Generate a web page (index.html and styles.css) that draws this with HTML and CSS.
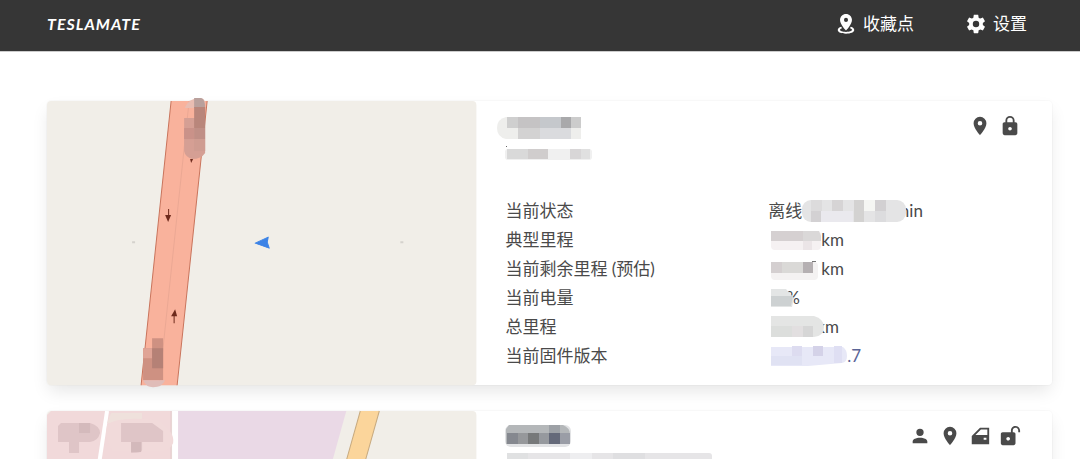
FILE: index.html
```
<!DOCTYPE html>
<html lang="zh-CN">
<head>
    <meta charset="UTF-8">
    <meta name="viewport" content="width=device-width, initial-scale=1.0">
    <title>TeslaMate</title>
    <link rel="stylesheet" href="styles.css">
</head>
<body>

    <nav class="navbar">
        <a href="#" class="brand">TESLAMATE</a>
        <div class="navbar-end">
            <a href="#" class="navbar-item">
                <svg class="icon" viewBox="0 0 24 24"><path d="M12,1C15.600,1 18.500,3.900 18.500,7.500C18.500,12.400 12,19 12,19C12,19 5.500,12.400 5.500,7.500C5.500,3.900 8.400,1 12,1M12,5.300A2.200,2.200 0 0,0 9.800,7.500A2.200,2.200 0 0,0 12,9.700A2.200,2.200 0 0,0 14.200,7.500A2.200,2.200 0 0,0 12,5.300M21,18.500C21,21 17,22.500 12,22.500C7,22.500 3,21 3,18.500C3,17 4.500,15.800 6.700,15L7.800,16.600C6.300,17.100 5.400,17.700 5.400,18.300C5.400,19.600 8.400,20.600 12,20.600C15.600,20.600 18.600,19.600 18.600,18.300C18.600,17.700 17.700,17.100 16.200,16.600L17.300,15C19.500,15.800 21,17 21,18.500Z"/></svg>
                <span>收藏点</span>
            </a>
            <a href="#" class="navbar-item">
                <svg class="icon" viewBox="0 0 24 24"><path d="M12,15.5A3.5,3.5 0 0,1 8.5,12A3.5,3.5 0 0,1 12,8.5A3.5,3.5 0 0,1 15.5,12A3.5,3.5 0 0,1 12,15.5M19.43,12.97C19.47,12.65 19.5,12.33 19.5,12C19.5,11.67 19.47,11.34 19.43,11L21.54,9.37C21.73,9.22 21.78,8.95 21.66,8.73L19.66,5.27C19.54,5.05 19.27,4.96 19.05,5.05L16.56,6.05C16.04,5.66 15.5,5.32 14.87,5.07L14.5,2.42C14.46,2.18 14.25,2 14,2H10C9.75,2 9.54,2.18 9.5,2.42L9.13,5.07C8.5,5.32 7.96,5.66 7.44,6.05L4.95,5.05C4.73,4.96 4.46,5.05 4.34,5.27L2.34,8.73C2.21,8.95 2.27,9.22 2.46,9.37L4.57,11C4.53,11.34 4.5,11.67 4.5,12C4.5,12.33 4.53,12.65 4.57,12.97L2.46,14.63C2.27,14.78 2.21,15.05 2.34,15.27L4.34,18.73C4.46,18.95 4.73,19.03 4.95,18.95L7.44,17.94C7.96,18.34 8.5,18.68 9.13,18.93L9.5,21.58C9.54,21.82 9.75,22 10,22H14C14.25,22 14.46,21.82 14.5,21.58L14.87,18.93C15.5,18.67 16.04,18.34 16.56,17.94L19.05,18.95C19.27,19.03 19.54,18.95 19.66,18.73L21.66,15.27C21.78,15.05 21.73,14.78 21.54,14.63L19.43,12.97Z"/></svg>
                <span>设置</span>
            </a>
        </div>
    </nav>

    <main class="container">
        <article class="car-card">
            <div class="car-map">
                <svg viewBox="0 0 429 284">
                    <rect width="429" height="284" rx="4" fill="#f1eee8"/>
                    <!-- road -->
                    <path d="M124 0H160L130 284H94Z" fill="#f9b29c"/>
                    <path d="M124 0L94 284M160 0L130 284" stroke="#c9745c" fill="none"/>
                    <path d="M142 0L112 284" stroke="#eba894" fill="none"/>
                    <path d="M121.500 108V116" stroke="#6e2a1c"/>
                    <path d="M118 114L121 121L124 114Z" fill="#6e2a1c"/>
                    <path d="M127 222V213" stroke="#6e2a1c"/>
                    <path d="M124 215L128 208L130 215Z" fill="#6e2a1c"/>
                    <path d="M143 58H146L144 62Z" fill="#6e2a1c"/>
                    <!-- road labels -->
                    <path d="M137 17H158V52Q154 58 145 58Q138 56 137 50Z" fill="#d59f94"/>
                    <path d="M138 6Q142 -3 153 -3Q158 -3 158 3V7H138Z" fill="#e9bdb2"/>
                    <path d="M147 -3H154Q158 -2 158 7H147Z" fill="#b9a09c"/>
                    <rect x="147" y="6" width="11" height="21" fill="#b9867b"/>
                    <rect x="147" y="27" width="11" height="11" fill="#c08f86"/>
                    <rect x="137" y="27" width="10" height="11" fill="#ca9289"/>
                    <rect x="147" y="38" width="11" height="12" fill="#cf9c91"/>
                    <path d="M96 247H105V237H116V279H96Z" fill="#ce9182"/>
                    <rect x="96" y="247" width="9" height="10" fill="#e0a496"/>
                    <rect x="105" y="247" width="11" height="20" fill="#b58176"/>
                    <path d="M96 279H118Q115 286 106 286Q99 286 96 279Z" fill="#e0bcb8"/>
                    <!-- car position -->
                    <path d="M208 142L221 136L220 141L222 147Z" fill="#3b82e6" stroke="#3b82e6" stroke-linejoin="round"/>
                    <path d="M85 141H88M353 141H356" stroke="#d5d2cd" stroke-width="2"/>
                </svg>
            </div>
            <div class="car-content">
                <header class="car-header">
                    <div class="car-heading">
                        <svg class="mosaic" width="84" height="24" viewBox="0 -2 84 24">
                            <path d="M9 0Q0 2 0 11Q0 20 9 22H84V0Z" fill="#eeeeec"/>
                            <rect x="10" width="11" height="11" fill="#cfcfcf"/>
                            <rect x="21" width="22" height="11" fill="#c5c3c4"/>
                            <rect x="43" width="21" height="11" fill="#c5c8cc"/>
                            <rect x="64" width="10" height="11" fill="#a9a9ab"/>
                            <rect x="74" width="10" height="11" fill="#cccccc"/>
                            <rect x="21" y="11" width="22" height="11" fill="#d3d2d2"/>
                            <rect x="43" y="11" width="31" height="11" fill="#dadbde"/>
                        </svg>
                        <svg class="mosaic subtitle" width="96" height="15" viewBox="0 -4 96 15">
                            <rect x="8" width="87" height="11" rx="3" fill="#f0f0f0"/>
                            <rect x="10" width="21" height="10" fill="#d9d9d9"/>
                            <rect x="31" width="20" height="10" fill="#d0cdcd"/>
                            <rect x="73" width="11" height="10" fill="#d8d6d7"/>
                            <rect x="84" width="9" height="10" fill="#e0e0e0"/>
                            <rect x="9" y="-3" width="1" height="1" fill="#666"/>
                        </svg>
                    </div>
                    <div class="car-icons">
                        <svg class="icon" viewBox="0 0 24 24"><path d="M12,11.5A2.5,2.5 0 0,1 9.5,9A2.5,2.5 0 0,1 12,6.5A2.5,2.5 0 0,1 14.5,9A2.5,2.5 0 0,1 12,11.5M12,2A7,7 0 0,0 5,9C5,14.25 12,22 12,22C12,22 19,14.25 19,9A7,7 0 0,0 12,2Z"/></svg>
                        <svg class="icon" viewBox="0 0 24 24"><path d="M12,17A2,2 0 0,0 14,15C14,13.89 13.1,13 12,13A2,2 0 0,0 10,15A2,2 0 0,0 12,17M18,8A2,2 0 0,1 20,10V20A2,2 0 0,1 18,22H6A2,2 0 0,1 4,20V10C4,8.89 4.9,8 6,8H7V6A5,5 0 0,1 12,1A5,5 0 0,1 17,6V8H18M12,3A3,3 0 0,0 9,6V8H15V6A3,3 0 0,0 12,3Z"/></svg>
                    </div>
                </header>
                <table class="car-table">
                    <tr>
                        <th scope="row">当前状态</th>
                        <td><div class="value">离线
                            <svg class="mosaic over" width="104" height="22">
                                <rect width="104" height="22" rx="9" fill="#e4e4e5"/>
                                <rect x="9" width="11" height="11" fill="#dcdbdc"/>
                                <rect x="9" y="11" width="10" height="11" fill="#d3d1d3"/>
                                <rect x="19" y="11" width="32" height="11" fill="#eae9ee"/>
                                <rect x="30" width="11" height="11" fill="#d6d4d5"/>
                                <rect x="52" width="10" height="22" fill="#d3d2d1"/>
                                <rect x="62" width="11" height="11" fill="#f5f6f3"/>
                                <rect x="73" width="11" height="11" fill="#d2d0d2"/>
                                <rect x="73" y="11" width="11" height="11" fill="#dcdcde"/>
                            </svg>min</div></td>
                    </tr>
                    <tr>
                        <th scope="row">典型里程</th>
                        <td><div class="value">
                            <svg class="mosaic" width="53" height="22">
                                <rect x="3" y="2" width="50" height="19" rx="4" fill="#f5f1f2"/>
                                <path d="M3 2H51L53 7V12H3Z" fill="#dad8d8"/>
                                <rect x="3" y="2" width="32" height="10" fill="#d5d0d1"/>
                                <rect x="35" y="12" width="9" height="9" fill="#ebe5e7"/>
                            </svg>km</div></td>
                    </tr>
                    <tr>
                        <th scope="row">当前剩余里程 (预估)</th>
                        <td><div class="value">
                            <svg class="mosaic" width="53" height="22">
                                <rect x="3" y="4" width="47" height="18" rx="4" fill="#f4f2f2"/>
                                <rect x="3" y="4" width="11" height="11" fill="#d4cfd0"/>
                                <rect x="14" y="4" width="21" height="11" fill="#dad9d7"/>
                                <rect x="35" y="4" width="10" height="11" fill="#b5b0b2"/>
                                <rect x="44" y="3" width="4" height="1" fill="#777"/>
                            </svg>km</div></td>
                    </tr>
                    <tr>
                        <th scope="row">当前电量</th>
                        <td><div class="value">
                            <svg class="mosaic over" width="29" height="22">
                                <path d="M3 2H18L26 11L24 20H3Z" fill="#e3e5e5"/>
                                <path d="M3 9H25L23 19H3Z" fill="#cdd1d2"/>
                            </svg>%</div></td>
                    </tr>
                    <tr>
                        <th scope="row">总里程</th>
                        <td><div class="value">
                            <svg class="mosaic over" width="59" height="22">
                                <path d="M3 0H46Q56 3 56 11Q56 20 46 21H3Z" fill="#e4e5e4"/>
                                <rect x="3" y="10" width="21" height="11" fill="#dcdedc"/>
                                <rect x="24" y="10" width="11" height="11" fill="#e2dfe0"/>
                                <rect x="35" y="10" width="10" height="11" fill="#d6d6d6"/>
                            </svg>km</div></td>
                    </tr>
                    <tr>
                        <th scope="row">当前固件版本</th>
                        <td><div class="value">
                            <svg class="mosaic" width="79" height="22">
                                <path d="M3 2H75Q79 5 79 11Q79 17 74 18L40 21H3Z" fill="#e7e8f7"/>
                                <rect x="24" y="1" width="10" height="10" fill="#dddcf0"/>
                                <rect x="45" y="1" width="10" height="10" fill="#d4d2e8"/>
                                <rect x="66" y="1" width="8" height="17" fill="#dfdff3"/>
                                <rect x="3" y="11" width="31" height="9" fill="#e0e2f3"/>
                            </svg><a href="#">.7</a></div></td>
                    </tr>
                </table>
            </div>
        </article>

        <article class="car-card">
            <div class="car-map">
                <svg viewBox="0 0 429 284">
                    <rect width="429" height="284" rx="4" fill="#f1eee8"/>
                    <path d="M4 0H124V284H0V4Z" fill="#f1d9da"/>
                    <path d="M124 0V284" stroke="#e2c8ca"/>
                    <path d="M125 0H131V284H125Z" fill="#fff"/>
                    <path d="M60 0L17 284" stroke="#fff" stroke-width="4"/>
                    <path d="M131 0H299L220 284H131Z" fill="#ead9e6"/>
                    <path d="M313 0H332L252 284H233Z" fill="#fbd59b"/>
                    <path d="M313 0L233 284M332 0L252 284" stroke="#c8ab80" fill="none"/>
                    <!-- building labels -->
                    <path d="M64 2H95V12H60Z" fill="#efe1dc"/>
                    <path d="M60 14Q70 5 110 9Q128 20 126 32Q122 42 110 40H65Q57 25 60 14Z" fill="#f1dada"/>
                    <path d="M14 12H43Q53 15 53 22Q51 30 43 31H32V42H22V31H11V15Z" fill="#dfc5c7"/>
                    <rect x="32" y="12" width="11" height="10" fill="#d4babc"/>
                    <path d="M74 12H105L116 20V31H95V39Q95 42 84 42V31H74Z" fill="#dfc5c7"/>
                    <rect x="84" y="31" width="10" height="10" fill="#d3b9bb"/>
                </svg>
            </div>
            <div class="car-content">
                <header class="car-header">
                    <div class="car-heading">
                        <svg class="mosaic" width="84" height="22">
                            <rect x="8" y="0" width="66" height="22" rx="6" fill="#e2e3e5"/>
                            <path d="M12 0H66Q73 3 73 9V19H9V4Z" fill="#b4b7b9"/>
                            <rect x="10" y="8" width="11" height="11" fill="#85888f"/>
                            <rect x="21" y="8" width="10" height="11" fill="#96989b"/>
                            <rect x="31" y="8" width="11" height="11" fill="#77797a"/>
                            <rect x="42" y="8" width="10" height="11" fill="#96999e"/>
                            <rect x="52" y="0" width="11" height="8" fill="#9da1a6"/>
                            <rect x="52" y="8" width="11" height="11" fill="#646979"/>
                            <rect x="63" y="8" width="10" height="11" fill="#9a9da6"/>
                        </svg>
                        <svg class="mosaic subtitle" width="216" height="11">
                            <rect x="10" width="205" height="11" rx="3" fill="#e6e5e7"/>
                            <rect x="10" width="21" height="11" fill="#e0e1e2"/>
                            <rect x="73" width="22" height="11" fill="#eeeef0"/>
                            <rect x="116" width="32" height="11" fill="#dfdfe1"/>
                        </svg>
                    </div>
                    <div class="car-icons">
                        <svg class="icon" viewBox="0 0 24 24"><path d="M12,4A4,4 0 0,1 16,8A4,4 0 0,1 12,12A4,4 0 0,1 8,8A4,4 0 0,1 12,4M12,14C16.42,14 20,15.79 20,18V20H4V18C4,15.79 7.58,14 12,14Z"/></svg>
                        <svg class="icon" viewBox="0 0 24 24"><path d="M12,11.5A2.5,2.5 0 0,1 9.5,9A2.5,2.5 0 0,1 12,6.5A2.5,2.5 0 0,1 14.5,9A2.5,2.5 0 0,1 12,11.5M12,2A7,7 0 0,0 5,9C5,14.25 12,22 12,22C12,22 19,14.25 19,9A7,7 0 0,0 12,2Z"/></svg>
                        <svg class="icon" viewBox="0 0 24 24"><path fill-rule="evenodd" d="M22,3H12L3,12V21H22V3M20,5V11H7L13,5H20M16,14H19V16H16V14Z"/></svg>
                        <svg class="icon" viewBox="0 0 24 24"><path d="M18 1C15.24 1 13 3.24 13 6V8H4C2.9 8 2 8.89 2 10V20C2 21.11 2.9 22 4 22H16C17.11 22 18 21.11 18 20V10C18 8.9 17.11 8 16 8H15V6C15 4.34 16.34 3 18 3C19.66 3 21 4.34 21 6V8H23V6C23 3.24 20.76 1 18 1M10 13C11.1 13 12 13.89 12 15C12 16.11 11.11 17 10 17C8.9 17 8 16.11 8 15C8 13.9 8.9 13 10 13Z"/></svg>
                    </div>
                </header>
            </div>
        </article>
    </main>

</body>
</html>
```
FILE: styles.css
```
/* Base */
body {
    margin: 0;
    height: 100vh;
    overflow: hidden;
    font-family: Lato, "Noto Sans CJK SC", sans-serif;
    font-size: 17px;
    line-height: 29px;
    color: #4a4a4a;
    background-color: #fff;
}
a {
    text-decoration: none;
    color: inherit;
}
.icon {
    display: block;
    width: 22px;
    height: 22px;
    fill: currentColor;
}

/* Navbar */
.navbar {
    display: flex;
    justify-content: space-between;
    align-items: center;
    box-sizing: border-box;
    height: 52px;
    padding: 0 53px 4px 47px;
    background-color: #363636;
    border-bottom: 1px solid #ccc;
    color: #fff;
}
.brand {
    font-size: 16px;
    font-style: italic;
    font-weight: 700;
    letter-spacing: 1px;
}
.navbar-end {
    display: flex;
    gap: 51px;
}
.navbar-item {
    display: flex;
    align-items: center;
    gap: 6px;
}

/* Car cards */
.container {
    display: flex;
    flex-direction: column;
    gap: 26px;
    padding: 49px 28px 0 47px;
}
.car-card {
    display: grid;
    grid-template-columns: 47fr 63fr;
    background-color: #fff;
    border-radius: 4px;
    box-shadow: 0 8px 17px -2px rgba(10,10,10,0.1), 0 0 0 1px rgba(10,10,10,0.02);
}
.car-map svg {
    display: block;
    width: 100%;
    overflow: visible;
}
.car-content {
    padding: 14px 31px 0 29px;
}
.car-header {
    display: flex;
    justify-content: space-between;
    height: 81px;
}
.car-heading {
    margin-left: -8px;
}
.car-icons {
    display: flex;
    gap: 8px;
}

/* Pixelated private data */
.mosaic {
    display: block;
    flex: none;
}
.subtitle {
    margin-top: 6px;
}

/* Status table */
.car-table {
    width: 100%;
    table-layout: fixed;
    border-collapse: collapse;
}
.car-table th,
.car-table td {
    padding: 0;
    height: 29px;
    font-weight: 400;
    text-align: left;
}
.car-table th {
    width: 51%;
}
.value {
    display: flex;
    align-items: center;
}
.over {
    position: relative;
    margin-right: -11px;
}
.value a {
    color: #5a6496;
}
```
